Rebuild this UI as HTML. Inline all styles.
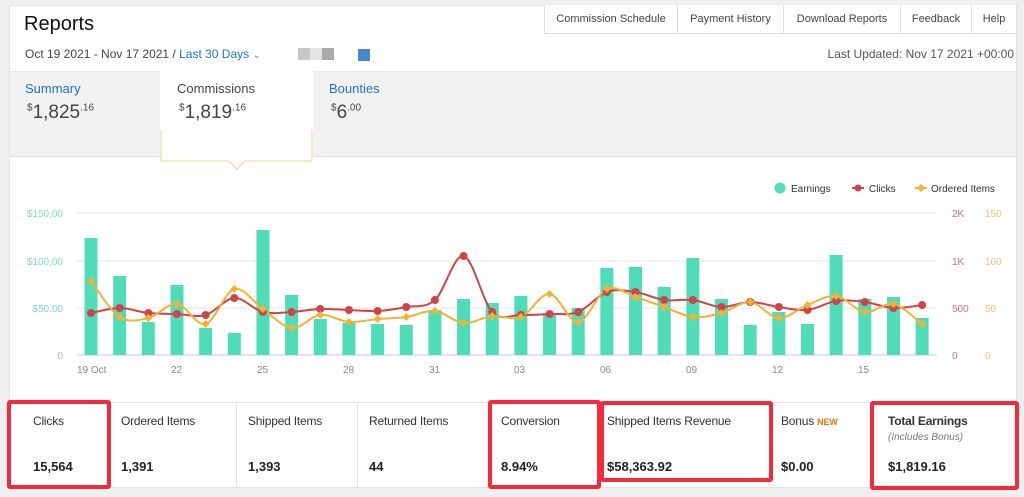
<!DOCTYPE html>
<html><head><meta charset="utf-8">
<style>
*{box-sizing:border-box;margin:0;padding:0}
body{width:1024px;height:497px;background:#efefef;font-family:"Liberation Sans",sans-serif;position:relative;overflow:hidden;color:#333}
.card{position:absolute;left:9px;top:5px;width:1008px;height:483px;background:#fff;border:1px solid #e2e2e2}
.a{position:absolute;white-space:nowrap}
.nav{position:absolute;top:5px;height:29px;border-left:1px solid #ddd;border-bottom:1px solid #ddd;font-size:11px;color:#444;text-align:center;line-height:29px;background:#fff}
.band{position:absolute;left:10px;top:71px;width:1006px;height:86px;background:#f2f2f2;border-top:1px dotted #ddd;border-bottom:1px solid #ddd}
.st{position:absolute;top:402px;height:86px;border-right:1px solid #e4e4e4}
.st .l{position:absolute;left:11px;top:12px;font-size:12px;color:#333;letter-spacing:-0.2px}
.st .v{position:absolute;left:11px;top:57px;font-size:13px;font-weight:bold;color:#222}
.rb{position:absolute;border:4px solid #f42a3c;border-radius:3px}
</style></head><body>
<div class="card"></div>
<div class="a" style="left:24px;top:13px;font-size:20px;color:#111">Reports</div>
<div class="nav" style="left:544px;width:133px">Commission Schedule</div>
<div class="nav" style="left:677px;width:106px">Payment History</div>
<div class="nav" style="left:783px;width:117px">Download Reports</div>
<div class="nav" style="left:900px;width:71px">Feedback</div>
<div class="nav" style="left:971px;width:45px">Help</div>
<div class="a" style="left:25px;top:47px;font-size:12px;color:#444">Oct 19 2021 - Nov 17 2021 / <span style="color:#1a73c9">Last 30 Days</span> <span style="color:#888;font-size:10px">&#8964;</span></div>
<div class="a" style="left:298px;top:48px;width:12px;height:12px;background:#c8c8c8"></div>
<div class="a" style="left:310px;top:48px;width:12px;height:12px;background:#e4e4e4"></div>
<div class="a" style="left:322px;top:48px;width:12px;height:12px;background:#aaa"></div>
<div class="a" style="left:358px;top:49px;width:12px;height:12px;background:#4a86cf"></div>
<div class="a" style="right:10px;top:47px;font-size:12px;color:#555">Last Updated: Nov 17 2021 +00:00</div>
<div class="band"></div>
<svg class="a" style="left:160px;top:70px" width="154" height="104"><rect x="0" y="0" width="153" height="91" fill="#fff"/><path d="M1 60 V91 H69 L77 99 L85 91 H152 V60" fill="none" stroke="#f7d08a"/></svg>
<div class="a" style="left:25px;top:81px;font-size:13px;color:#1a73c9">Summary</div>
<div class="a" style="left:27px;top:102px;font-size:19px;color:#444"><sup style="font-size:10px">$</sup>1,825<sup style="font-size:10px">.16</sup></div>
<div class="a" style="left:177px;top:81px;font-size:13px;color:#444">Commissions</div>
<div class="a" style="left:179px;top:102px;font-size:19px;color:#444"><sup style="font-size:10px">$</sup>1,819<sup style="font-size:10px">.16</sup></div>
<div class="a" style="left:329px;top:81px;font-size:13px;color:#1a73c9">Bounties</div>
<div class="a" style="left:331px;top:102px;font-size:19px;color:#444"><sup style="font-size:10px">$</sup>6<sup style="font-size:10px">.00</sup></div>

<svg class="a" style="left:0;top:170px" width="1024" height="210" id="ch">
<g font-family="Liberation Sans,sans-serif" font-size="10">
<circle cx="780" cy="18" r="5.5" fill="#4fdcb9"/><text x="791" y="22" fill="#333">Earnings</text>
<line x1="852" y1="18" x2="864" y2="18" stroke="#d04447" stroke-width="2"/><circle cx="858" cy="18" r="3.5" fill="#d04447"/><text x="869" y="22" fill="#333">Clicks</text>
<line x1="915" y1="18" x2="927" y2="18" stroke="#f2b233" stroke-width="2"/><path d="M921 14 L925 18 L921 22 L917 18Z" fill="#f2b233"/><text x="931" y="22" fill="#333">Ordered Items</text>
<g stroke="#e4e4e4"><line x1="77" y1="43" x2="937" y2="43"/><line x1="77" y1="91" x2="937" y2="91"/><line x1="77" y1="138" x2="937" y2="138"/></g>
<line x1="77" y1="185" x2="937" y2="185" stroke="#d6dde6" stroke-width="1.5"/>
<g fill="#7fd8c2" text-anchor="end"><text x="63" y="47">$150.00</text><text x="63" y="95">$100.00</text><text x="63" y="142">$50.00</text><text x="63" y="189">0</text></g>
<g fill="#d07070"><text x="952" y="47">2K</text><text x="952" y="95">1K</text><text x="952" y="142">500</text><text x="952" y="189">0</text></g>
<g fill="#efc070"><text x="985" y="47">150</text><text x="985" y="95">100</text><text x="985" y="142">50</text><text x="985" y="189">0</text></g>
<g fill="#888"><text x="77" y="203">19 Oct</text><text x="171" y="203">22</text><text x="257" y="203">25</text><text x="343" y="203">28</text><text x="429" y="203">31</text><text x="514" y="203">03</text><text x="600" y="203">06</text><text x="686" y="203">09</text><text x="772" y="203">12</text><text x="858" y="203">15</text></g>
</g>
<g id="bars" fill="#4fdcb9"></g>
<path id="red" fill="none" stroke="#d04447" stroke-width="2"/>
<path id="org" fill="none" stroke="#f2b233" stroke-width="2"/>
<g id="dots"></g>
</svg>

<div class="st" style="left:10px;width:100px"><div class="l" style="left:23px">Clicks</div><div class="v" style="left:23px">15,564</div></div>
<div class="st" style="left:110px;width:127px"><div class="l">Ordered Items</div><div class="v">1,391</div></div>
<div class="st" style="left:237px;width:121px"><div class="l">Shipped Items</div><div class="v">1,393</div></div>
<div class="st" style="left:358px;width:132px"><div class="l">Returned Items</div><div class="v">44</div></div>
<div class="st" style="left:490px;width:110px"><div class="l">Conversion</div><div class="v">8.94%</div></div>
<div class="st" style="left:600px;width:170px"><div class="l" style="left:7px">Shipped Items Revenue</div><div class="v" style="left:7px">$58,363.92</div></div>
<div class="st" style="left:770px;width:101px"><div class="l">Bonus <span style="color:#e47911;font-size:9px;font-weight:bold">NEW</span></div><div class="v">$0.00</div></div>
<div class="st" style="left:871px;width:145px;border:none"><div class="l" style="font-weight:bold;left:17px">Total Earnings</div><div class="a" style="left:17px;top:30px;font-size:10px;font-style:italic;color:#777">(Includes Bonus)</div><div class="v" style="left:17px">$1,819.16</div></div>
<div style="position:absolute;left:10px;top:402px;width:1006px;border-top:1px solid #e4e4e4"></div>

<div class="rb" style="left:7px;top:400px;width:104px;height:89px"></div>
<div class="rb" style="left:488px;top:400px;width:113px;height:89px"></div>
<div class="rb" style="left:600px;top:401px;width:173px;height:81px"></div>
<div class="rb" style="left:870px;top:401px;width:149px;height:89px"></div>

<script>
var bt=[238,276,322,285,328,333,230,295,319,323,324,325,310,299,303,296,315,308,268,267,287,258,299,325,312,324,255,299,297,318];
var rd=[313,308,313,314,315,298,312,312,309,310,311,307,300,256,312,315,314,312,292,292,300,300,307,302,307,310,301,302,308,305];
var og=[281,317,318,304,324,289,309,328,315,322,319,317,311,323,316,317,294,322,289,297,307,317,313,302,318,305,296,312,304,324];
var ns="http://www.w3.org/2000/svg",off=170,bars=document.getElementById('bars'),dots=document.getElementById('dots');
function X(i){return 91+i*28.66}
for(var i=0;i<30;i++){var r=document.createElementNS(ns,'rect');r.setAttribute('x',X(i)-6.5);r.setAttribute('y',bt[i]-off);r.setAttribute('width',13);r.setAttribute('height',355-bt[i]);bars.appendChild(r);}
function sm(a){var p=a.map(function(y,i){return [X(i),y-off]});var d='M'+p[0][0]+' '+p[0][1];for(var i=0;i<p.length-1;i++){var p0=p[i-1]||p[i],p1=p[i],p2=p[i+1],p3=p[i+2]||p2;d+=' C'+(p1[0]+(p2[0]-p0[0])/6)+' '+(p1[1]+(p2[1]-p0[1])/6)+' '+(p2[0]-(p3[0]-p1[0])/6)+' '+(p2[1]-(p3[1]-p1[1])/6)+' '+p2[0]+' '+p2[1];}return d;}
document.getElementById('red').setAttribute('d',sm(rd));document.getElementById('org').setAttribute('d',sm(og));
for(var i=0;i<30;i++){var c=document.createElementNS(ns,'circle');c.setAttribute('cx',X(i));c.setAttribute('cy',rd[i]-off);c.setAttribute('r',4);c.setAttribute('fill','#d04447');dots.appendChild(c);
var q=document.createElementNS(ns,'path');var x=X(i),y=og[i]-off;q.setAttribute('d','M'+x+' '+(y-4)+' L'+(x+4)+' '+y+' L'+x+' '+(y+4)+' L'+(x-4)+' '+y+'Z');q.setAttribute('fill','#f2b233');dots.appendChild(q);}
</script>
</body></html>
